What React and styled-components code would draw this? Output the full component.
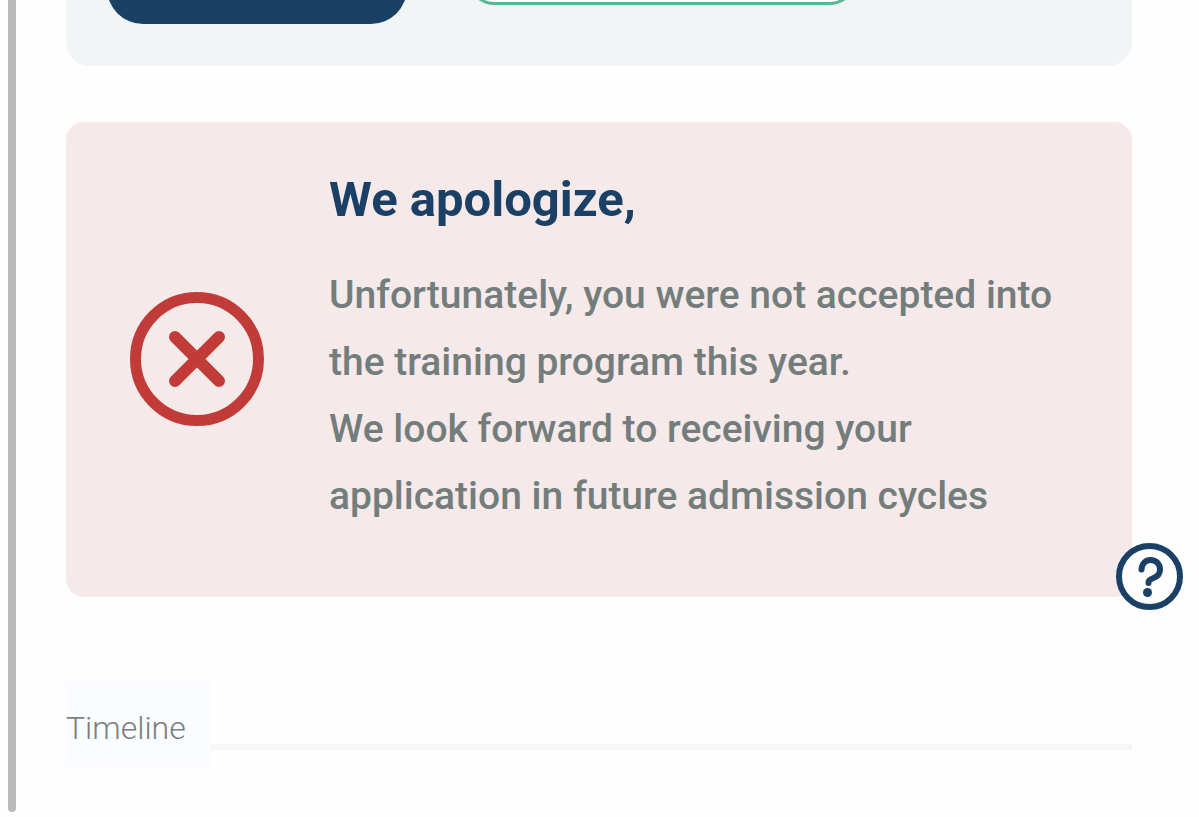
import styled, { createGlobalStyle } from "styled-components";

const App = () => {
  return (
    <>
      <GlobalStyle />
      <Shell>
        <ScrollThumb />
        <Main>
          <ActionPanel>
            <PrimaryButton type="button" aria-label="Continue" />
            <OutlineButton type="button" aria-label="Details" />
          </ActionPanel>

          <StatusCard>
            <RejectedIcon viewBox="0 0 134 134" aria-hidden="true">
              <circle cx="67" cy="67" r="61.5" />
              <path d="M45 45 L89 89 M89 45 L45 89" />
            </RejectedIcon>
            <StatusBody>
              <StatusTitle>We apologize,</StatusTitle>
              <StatusText>
                Unfortunately, you were not accepted into
                <br />
                the training program this year.
                <br />
                We look forward to receiving your
                <br />
                application in future admission cycles
              </StatusText>
            </StatusBody>
          </StatusCard>

          <TimelineHeader>
            <TimelineTitle>Timeline</TimelineTitle>
            <TimelineRule />
          </TimelineHeader>
        </Main>
      </Shell>

      <HelpButton type="button" aria-label="Help">
        <HelpIcon viewBox="0 0 67 67" aria-hidden="true">
          <circle cx="33.5" cy="33.5" r="30.5" />
          <path d="M25.5 26.5 C26 20.5 29.5 17 34.5 17 C40 17 44 21 44 26.5 C44 31 41 34 36.5 35.5 C33.5 36.5 32.5 37.5 32.5 40" />
          <circle className="dot" cx="31.5" cy="49.5" r="4.5" />
        </HelpIcon>
      </HelpButton>
    </>
  );
};

export default App;

const GlobalStyle = createGlobalStyle`
  * {
    box-sizing: border-box;
  }

  body {
    margin: 0;
    background: #fefefe;
    font-family: Roboto, "Liberation Sans", sans-serif;
  }
`;

// Layout
const Shell = styled.div`
  display: flex;
  gap: 50px;
  height: 100vh;
  padding: 0 67px 0 8px;
  overflow: hidden;
`;

const ScrollThumb = styled.div`
  flex: none;
  width: 8px;
  margin-bottom: 5px;
  border-radius: 0 0 4px 4px;
  background: #bababa;
`;

const Main = styled.main`
  flex: 1;
  min-width: 0;
`;

// Actions
const ActionPanel = styled.section`
  display: flex;
  align-items: flex-start;
  gap: 60px;
  margin-top: -90px;
  padding: 40px 41px 42px;
  border-radius: 24px;
  background: #f1f5f6;
`;

const PrimaryButton = styled.button`
  width: 300px;
  height: 74px;
  border: none;
  border-radius: 36px;
  background: #1a4066;
  cursor: pointer;
`;

const OutlineButton = styled.button`
  width: 390px;
  height: 55px;
  border: 3px solid #5cb595;
  border-radius: 28px;
  background: #fff;
  cursor: pointer;
`;

// Application status
const StatusCard = styled.section`
  display: flex;
  align-items: center;
  gap: 65px;
  margin-top: 56px;
  padding: 42px 64px 67px;
  border-radius: 18px;
  background: #f6e9e9;
`;

const RejectedIcon = styled.svg`
  flex: none;
  width: 134px;
  height: 134px;
  margin-top: 24px;
  fill: none;
  stroke: #c13c39;
  stroke-width: 11;
  stroke-linecap: round;

  path {
    stroke-width: 12;
  }
`;

const StatusBody = styled.div`
  flex: 1;
  min-width: 0;
`;

const StatusTitle = styled.h1`
  margin: 0 0 26px;
  color: #1a4066;
  font-size: 49px;
  font-weight: 700;
  line-height: 72px;
`;

const StatusText = styled.p`
  margin: 0;
  color: #737d7b;
  font-size: 39px;
  font-weight: 500;
  line-height: 67px;
  white-space: nowrap;
`;

// Timeline
const TimelineHeader = styled.header`
  display: flex;
  align-items: flex-end;
  margin-top: 84px;
`;

const TimelineTitle = styled.h2`
  margin: 0;
  padding: 10px 25px 0 0;
  background: #fbfcff;
  color: #7a7f80;
  font-size: 32px;
  font-weight: 300;
  line-height: 75px;
`;

const TimelineRule = styled.div`
  flex: 1;
  height: 6px;
  margin-bottom: 16px;
  background: #f4f6f8;
`;

const HelpButton = styled.button`
  position: fixed;
  right: 16px;
  bottom: 207px;
  width: 67px;
  height: 67px;
  padding: 0;
  border: none;
  border-radius: 50%;
  background: #fefefe;
  cursor: pointer;
`;

const HelpIcon = styled.svg`
  display: block;
  width: 100%;
  height: 100%;
  fill: none;
  stroke: #1a4066;
  stroke-width: 6;
  stroke-linecap: round;

  .dot {
    fill: #1a4066;
    stroke: none;
  }
`;
